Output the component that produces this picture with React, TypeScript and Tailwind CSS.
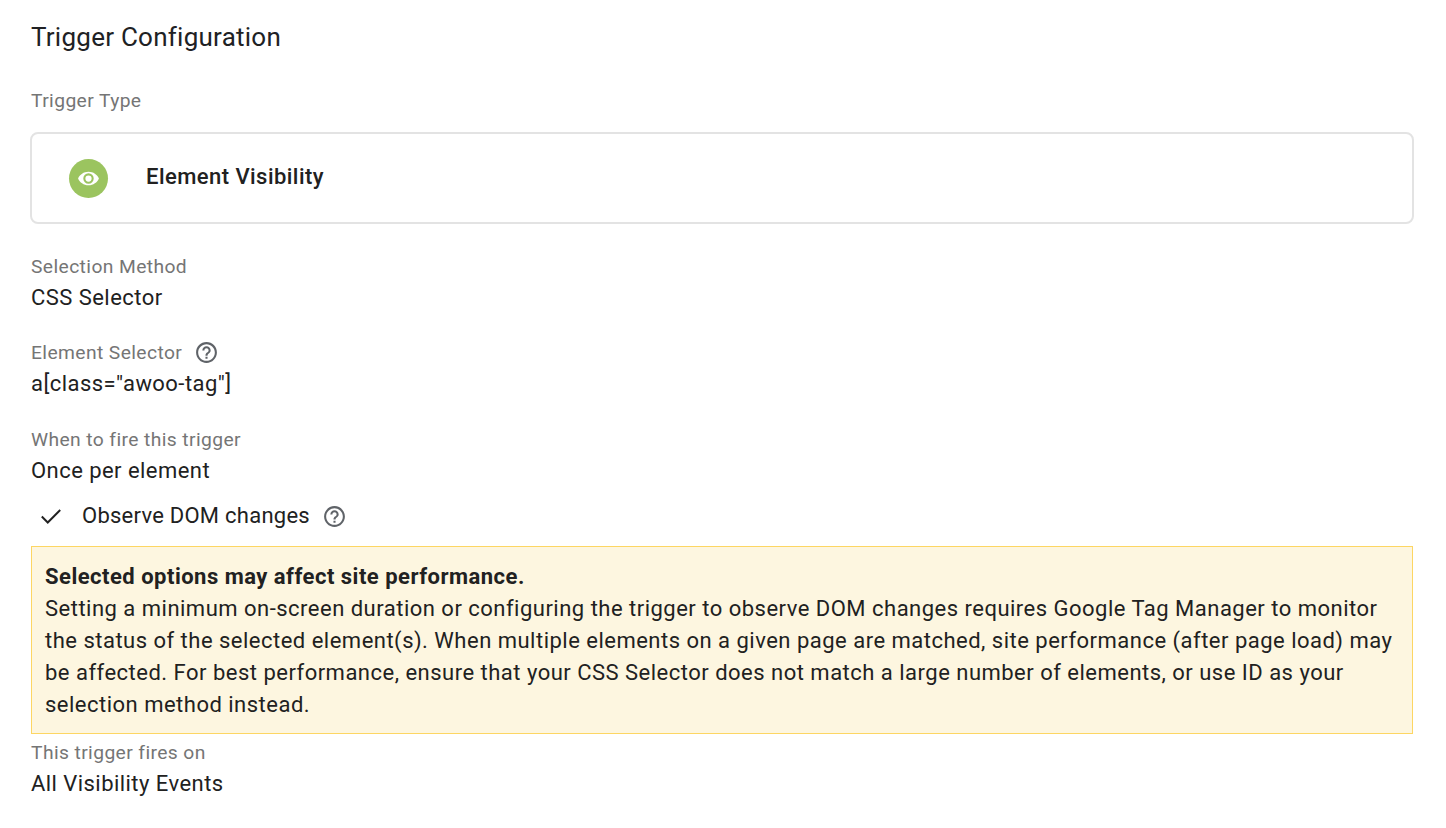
function Help() {
  return (
    <svg width="25" height="25" viewBox="0 0 24 24" fill="#5f6368" className="shrink-0">
      <path d="M11 18h2v-2h-2v2zm1-16C6.480 2 2 6.480 2 12s4.480 10 10 10 10-4.480 10-10S17.520 2 12 2zm0 18c-4.410 0-8-3.590-8-8s3.590-8 8-8 8 3.590 8 8-3.590 8-8 8zm0-14c-2.210 0-4 1.790-4 4h2c0-1.100.9-2 2-2s2 .9 2 2c0 2-3 1.750-3 5h2c0-2.250 3-2.500 3-5 0-2.210-1.790-4-4-4z" />
    </svg>
  );
}

const label = "text-[#757575] text-[19.25px] leading-[24px] tracking-[0.4px]";
const value = "text-[22px] leading-[28px] tracking-[0.45px]";

export default function App() {
  return (
    <div className="w-[1446px] h-[828px] overflow-hidden bg-white pl-[31px] pr-[32px] text-[#212121] font-['Roboto',sans-serif]">
      <h1 className="pt-[21px] text-[26px] leading-[32px] font-normal tracking-[0.25px] text-[#202124]">Trigger Configuration</h1>

      <div className={`mt-[36px] ${label}`}>Trigger Type</div>
      <div className="mt-[19px] -ml-px h-[92px] w-[1384px] rounded-[8px] border-2 border-[#e3e3e3] flex items-center pl-[37px]">
        <div className="w-[39px] h-[39px] rounded-full bg-[#9bc45f] flex items-center justify-center mt-[1px]">
          <svg width="25" height="25" viewBox="0 0 24 24" fill="#fff">
            <path fillRule="evenodd" d="M12 5.500c-4.600 0-8.400 2.700-10 6.500 1.600 3.800 5.400 6.500 10 6.500s8.400-2.700 10-6.500c-1.600-3.800-5.400-6.500-10-6.500zM12 17a5 5 0 1 1 0-10 5 5 0 0 1 0 10zM12 15a3 3 0 1 0 0-6 3 3 0 0 0 0 6z" />
          </svg>
        </div>
        <div className="ml-[38px] -mt-[2px] text-[22px] leading-[28px] font-medium tracking-[0.45px]">Element Visibility</div>
      </div>

      <div className={`mt-[31px] ${label}`}>Selection Method</div>
      <div className={`mt-[5px] ${value}`}>CSS Selector</div>

      <div className={`mt-[28px] flex items-center gap-[12px] ${label}`}>
        <span>Element Selector</span>
        <Help />
      </div>
      <div className={`mt-[5px] ${value}`}>a[class="awoo-tag"]</div>

      <div className={`mt-[30px] ${label}`}>When to fire this trigger</div>
      <div className={`mt-[5px] ${value}`}>Once per element</div>

      <div className="mt-[17px] flex items-center h-[28px] text-[22px] leading-[28px] tracking-[0.25px]">
        <svg width="26" height="26" viewBox="0 0 24 24" fill="none" stroke="#212121" strokeWidth="1.800" className="ml-[7px] shrink-0">
          <path d="M3.500 12.500 9 18 20.500 6.500" />
        </svg>
        <span className="ml-[18px]">Observe DOM changes</span>
        <span className="ml-[12px] flex"><Help /></span>
      </div>

      <div className="mt-[16px] h-[188px] w-[1382px] border border-[#fdd663] bg-[#fdf6e0] pl-[13px] pt-[14px] text-[22px] leading-[32px] tracking-[0.49px]">
        <div className="font-bold">Selected options may affect site performance.</div>
        <div>Setting a minimum on-screen duration or configuring the trigger to observe DOM changes requires Google Tag Manager to monitor</div>
        <div>the status of the selected element(s). When multiple elements on a given page are matched, site performance (after page load) may</div>
        <div>be affected. For best performance, ensure that your CSS Selector does not match a large number of elements, or use ID as your</div>
        <div>selection method instead.</div>
      </div>

      <div className={`mt-[7px] ${label}`}>This trigger fires on</div>
      <div className={`mt-[5px] ${value}`}>All Visibility Events</div>
    </div>
  );
}
